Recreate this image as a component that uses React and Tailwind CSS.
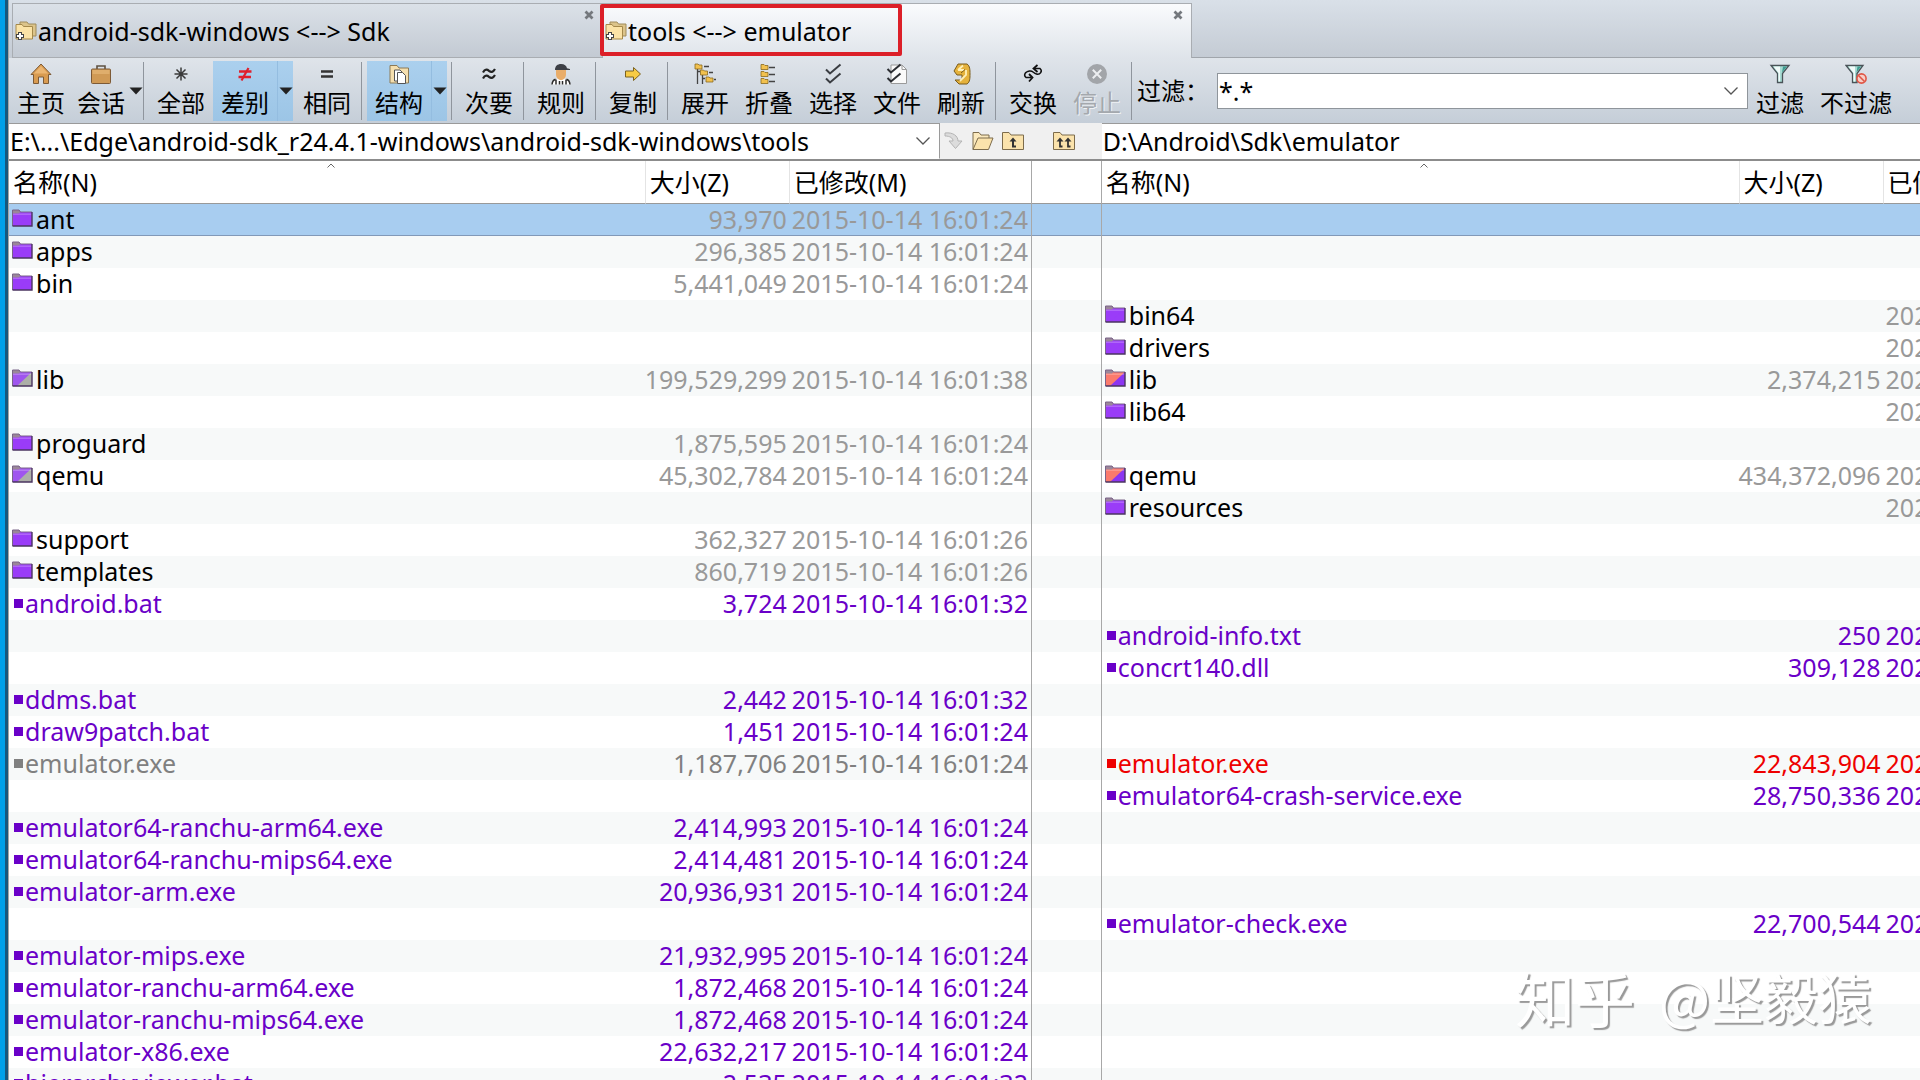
import React, { useState } from "react"

const BLACK = "text-black"
const PURPLE = "text-[#6a00c8]"
const GRAY = "text-[#808080]"
const RED = "text-[#ee0000]"

const T24 = "2015-10-14 16:01:24"
const T26 = "2015-10-14 16:01:26"
const T32 = "2015-10-14 16:01:32"
const T38 = "2015-10-14 16:01:38"

const dir = (name, size, date, kind = "orphan") => ({ name, size, date, kind })
const file = (name, size, date, color = PURPLE) => ({ name, size, date, color })

// one entry per line: [left side, right side]
const rows = [
  [dir("ant", "93,970", T24), null],
  [dir("apps", "296,385", T24), null],
  [dir("bin", "5,441,049", T24), null],
  [null, dir("bin64", "", "2021")],
  [null, dir("drivers", "", "2021")],
  [dir("lib", "199,529,299", T38, "older"), dir("lib", "2,374,215", "2021", "newer")],
  [null, dir("lib64", "", "2021")],
  [dir("proguard", "1,875,595", T24), null],
  [dir("qemu", "45,302,784", T24, "older"), dir("qemu", "434,372,096", "2021", "newer")],
  [null, dir("resources", "", "2021")],
  [dir("support", "362,327", T26), null],
  [dir("templates", "860,719", T26), null],
  [file("android.bat", "3,724", T32), null],
  [null, file("android-info.txt", "250", "2021")],
  [null, file("concrt140.dll", "309,128", "2021")],
  [file("ddms.bat", "2,442", T32), null],
  [file("draw9patch.bat", "1,451", T24), null],
  [file("emulator.exe", "1,187,706", T24, GRAY), file("emulator.exe", "22,843,904", "2021", RED)],
  [null, file("emulator64-crash-service.exe", "28,750,336", "2021")],
  [file("emulator64-ranchu-arm64.exe", "2,414,993", T24), null],
  [file("emulator64-ranchu-mips64.exe", "2,414,481", T24), null],
  [file("emulator-arm.exe", "20,936,931", T24), null],
  [null, file("emulator-check.exe", "22,700,544", "2021")],
  [file("emulator-mips.exe", "21,932,995", T24), null],
  [file("emulator-ranchu-arm64.exe", "1,872,468", T24), null],
  [file("emulator-ranchu-mips64.exe", "1,872,468", T24), null],
  [file("emulator-x86.exe", "22,632,217", T24), null],
  [file("hierarchyviewer.bat", "2,535", T32), null],
]

const Icon = ({ children }) => (
  <svg width="22" height="22" viewBox="0 0 22 22" fill="none" aria-hidden="true">{children}</svg>
)

const HomeIcon = () => (
  <Icon>
    <path d="M11 1 L21 11.5 H18.5 V20.5 H13.5 V14 H8.5 V20.5 H3.5 V11.5 H1 Z" fill="#d99b50" stroke="#7d5a36" strokeLinejoin="round" />
    <path d="M11 3 L18 10.5 H4 Z" fill="#ecb672" />
  </Icon>
)

const SessionIcon = () => (
  <Icon>
    <path d="M7 6 V3 H15 V6" stroke="#5e5142" strokeWidth="1.6" />
    <rect x="1.5" y="6" width="19" height="14.5" rx="1" fill="#d09a55" stroke="#7d5a36" />
    <path d="M2.5 7 H19.5 V11 H2.5 Z" fill="#dfae6c" />
  </Icon>
)

const AllIcon = () => (
  <Icon>
    <path d="M11 4.5 V17.5 M4.5 11 H17.5 M6.5 6.5 L15.5 15.5 M15.5 6.5 L6.5 15.5" stroke="#3a3a3a" strokeWidth="1.5" />
  </Icon>
)

const DiffIcon = () => (
  <Icon>
    <path d="M5 8.5 H17.5 M4.5 14 H17" stroke="#e0202c" strokeWidth="2.6" />
    <path d="M14.5 5 L7.5 17.5" stroke="#e0202c" strokeWidth="2.2" />
  </Icon>
)

const SameIcon = () => (
  <Icon>
    <path d="M5 8.5 H17 M5 13.5 H17" stroke="#333" strokeWidth="2.4" />
  </Icon>
)

const StructureIcon = () => (
  <Icon>
    <path d="M2 2.5 H9 L11 5 H20.5 V20 H2 Z" fill="#f5dfae" stroke="#8c7a56" />
    <path d="M6.5 7 H12 L14 9 V18 H6.5 Z" fill="#fff" stroke="#555" />
    <path d="M9.5 9.5 H14.5 L17.5 12.5 V20.5 H9.5 Z" fill="#fff" stroke="#555" />
  </Icon>
)

const MinorIcon = () => (
  <Icon>
    <path d="M5 9.5 C7 5.5 9.5 6.5 11 7.8 C13 9.4 15 9.5 17 6 M5 15.5 C7 11.5 9.5 12.5 11 13.8 C13 15.4 15 15.5 17 12" stroke="#222" strokeWidth="2.2" />
  </Icon>
)

const RulesIcon = () => (
  <Icon>
    <path d="M1.5 21.5 C2 17 5 15.5 11 15.5 C17 15.5 20 17 20.5 21.5 Z" fill="#fff" />
    <path d="M2 21.5 C2.3 18.5 3.5 17 5.5 16.3 M6 21.5 V16.5 M9.5 21.5 V18 M12.5 21.5 V18 M16 21.5 V16.5 M20 21.5 C19.7 18.5 18.5 17 16.5 16.3" stroke="#2a2a2a" strokeWidth="1.5" />
    <path d="M6 6 H16 V11 C16 14.5 14 17 11 17 C8 17 6 14.5 6 11 Z" fill="#e9ad6a" />
    <path d="M5 7 C5 3 7.5 1 11 1 C14.5 1 16.5 3 17 5.2 L20 6 V7 Z" fill="#3d4046" />
  </Icon>
)

const CopyIcon = () => (
  <Icon>
    <path d="M3.5 8 H11.5 V4.5 L18.5 11 L11.5 17.5 V14 H3.5 Z" fill="#f7cb45" stroke="#7a6222" strokeLinejoin="round" />
  </Icon>
)

const MiniFolder = ({ x, y }) => (
  <path d={`M${x} ${y} h3 l1 1 h3 v4 h-7 z`} fill="#f2c14e" stroke="#8a6a20" strokeWidth="0.8" />
)

const ExpandIcon = () => (
  <Icon>
    <path d="M3.5 6 V21 M8.5 12 V21 M10 3.5 H15 M15 9.5 H19 M3.5 8.5 H6 M8.5 15.5 H11 M20 16.5 H22" stroke="#444" strokeWidth="1.3" />
    <MiniFolder x={1} y={1} />
    <MiniFolder x={6.5} y={7} />
    <MiniFolder x={12} y={14} />
  </Icon>
)

const CollapseIcon = () => (
  <Icon>
    <path d="M11 4.5 H17 M11 11.5 H17 M11 18.5 H17" stroke="#444" strokeWidth="1.5" />
    <MiniFolder x={3} y={1.5} />
    <MiniFolder x={3} y={8.5} />
    <MiniFolder x={3} y={15.5} />
  </Icon>
)

const SelectIcon = () => (
  <Icon>
    <path d="M4 6.5 L8 10.5 L18.5 1.5 M4 15.5 L8 19.5 L18.5 10.5" stroke="#3a3d42" strokeWidth="2" />
  </Icon>
)

const FilesIcon = () => (
  <Icon>
    <path d="M5 2 H16 L20.5 6.5 V20.5 H5 Z" fill="#fafafa" stroke="#9a9a9a" />
    <path d="M16 2 V6.5 H20.5" stroke="#9a9a9a" />
    <path d="M1.5 6 L5 9.5 L14.5 1.5 M1.5 15 L5 18.5 L14.5 10.5" stroke="#2c2e33" strokeWidth="2" />
  </Icon>
)

const RefreshIcon = () => (
  <Icon>
    <path d="M12 1 H17 C20 3 20 7 20 11 C20 15 20 19 17 21 H9 L5 17 H12 V12 H7 L4 8 L8 1 Z" fill="#e5b23c" stroke="#7a5c1c" strokeLinejoin="round" />
    <path d="M8 7 L13 2.5 M8 7 H14 M16 7 V12 L10 18" stroke="#fff0b8" strokeWidth="1.8" />
    <path d="M11 10 L15 6.5" stroke="#7a5c1c" />
  </Icon>
)

const SwapIcon = () => (
  <Icon>
    <path d="M12 5.5 H18 C21 8 18 12 14.5 11 C11 10 11 7.5 7.5 8 C2.5 8.8 1.5 12.5 4 14.5 H9" stroke="#111" strokeWidth="1.5" />
    <path d="M15.5 2 L11.5 5.5 L15.5 9 M7 11 L10.5 14.5 L7 18.5" stroke="#111" strokeWidth="1.8" />
  </Icon>
)

const StopIcon = () => (
  <Icon>
    <circle cx="11" cy="11" r="10" fill="#a2a5a9" />
    <path d="M6.8 6.8 L15.2 15.2 M15.2 6.8 L6.8 15.2" stroke="#eceef0" strokeWidth="2" />
  </Icon>
)

const funnel = "M2 2.5 H20 L13.5 10.5 V19.5 H8.5 V10.5 Z"

const FilterIcon = () => (
  <Icon>
    <path d={funnel} fill="#a8dcd4" stroke="#4a5358" strokeWidth="1.3" />
    <path d="M4.5 3.5 H11 V18.5 H9.5 V10 Z" fill="#f2fbfa" />
    <path d="M14 3.5 H18 L13 9.8 Z" fill="#3f9c90" />
  </Icon>
)

const NoFilterIcon = () => (
  <Icon>
    <path d="M1 2.5 H18 L12 10.5 V19.5 H7.5 V10.5 Z" fill="#a8dcd4" stroke="#4a5358" strokeWidth="1.3" />
    <path d="M3.5 3.5 H10 V18.5 H8.5 V10 Z" fill="#f2fbfa" />
    <path d="M12.5 3.5 H16 L11.5 9.5 Z" fill="#3f9c90" />
    <circle cx="16.5" cy="15.5" r="4.6" fill="#f6cfc8" stroke="#e05544" strokeWidth="1.6" />
    <path d="M13.5 12.5 L19.5 18.5" stroke="#e05544" strokeWidth="1.6" />
  </Icon>
)

const SessionTabIcon = () => (
  <svg width="22" height="22" viewBox="0 0 22 22" fill="none" aria-hidden="true" className="shrink-0">
    <path d="M5 2 H12 L13.5 4 H21 V16 H5 Z" fill="#dcc48a" stroke="#a08c5c" />
    <path d="M1 4.5 H7 L8.5 6.5 H17.5 V19 H1 Z" fill="#fbe3a6" stroke="#a5894a" />
    <path d="M5 12 V20 M1 16 H9" stroke="#444" strokeWidth="4" />
    <path d="M5 13 V19 M2 16 H8" stroke="#fff" strokeWidth="2" />
  </svg>
)

const folderFills = {
  orphan: ["#9a3cf8", "#9a3cf8"],
  older: ["#9f55ee", "#adb0a8"],
  newer: ["#fb7a6c", "#8c35f2"],
}

function FolderIcon({ kind }) {
  const [front, corner] = folderFills[kind]
  return (
    <svg width="21" height="20" viewBox="0 0 21 20" aria-hidden="true" className="shrink-0">
      <path d="M0.5 1 H7 L8.5 3 H20 V17 H0.5 Z" fill={front} />
      <path d="M20 3 V17 H5 Z" fill={corner} />
      <path d="M1 4.5 H19.5 V6 H1 Z" fill="#fff" opacity="0.22" />
      <path d="M0.5 1 H7 L8.5 3 L7 4.5 H0.5 Z" fill="#9b8799" />
      <path d="M0.5 17 V1 H7 L8.5 3 H20" fill="none" stroke="#7a6488" />
      <path d="M20 3 V17 H0.5" fill="none" stroke="#4b3560" strokeWidth="1.4" />
    </svg>
  )
}

const Chevron = () => (
  <svg width="16" height="10" viewBox="0 0 16 10" fill="none" aria-hidden="true">
    <path d="M1.5 1.5 L8 8 L14.5 1.5" stroke="#555" strokeWidth="1.3" />
  </svg>
)

function ToolButton({ icon, label, className = "w-16", disabled }) {
  return (
    <button
      type="button"
      disabled={disabled}
      className={`flex h-15 shrink-0 flex-col items-center gap-1 whitespace-nowrap pt-[2px] text-2xl leading-7 ${disabled ? "text-[#a4a8ad] [text-shadow:1px_1px_0_#eef1f4]" : "text-black"} ${className}`}
    >
      {icon}
      {label}
    </button>
  )
}

function DropButton({ icon, label, active, className, arrowClass = "w-4" }) {
  return (
    <div className={`flex shrink-0 ${active ? "mr-[2px] bg-linear-to-b from-[#abd0ee] to-[#9cc5e6]" : ""}`}>
      <ToolButton icon={icon} label={label} className={className} />
      <button
        type="button"
        aria-label={`${label} ▾`}
        className={`flex items-center justify-center ${arrowClass} ${active ? "border-l border-[#94bde0]" : ""}`}
      >
        <svg width="14" height="8" viewBox="0 0 14 8" aria-hidden="true" className="shrink-0">
          <path d="M0.5 0.5 H13.5 L7 7.5 Z" fill="#222" />
        </svg>
      </button>
    </div>
  )
}

const Separator = () => <div className="ml-[2px] mr-[5px] h-[58px] w-px shrink-0 bg-[#8f959d]" />

function Tab({ title, active, children }) {
  return (
    <div
      className={`relative flex w-[590px] items-center border-l border-t border-[#a9adb2] pl-[2px] ${
        active ? "border-r bg-linear-to-b from-[#fafbfd] to-[#dfe4ea]" : "border-b bg-linear-to-b from-[#dbe1e8] to-[#c3cad3]"
      }`}
    >
      <button type="button" role="tab" aria-selected={active} className="flex grow items-center gap-px text-left text-[25px] leading-8">
        <SessionTabIcon />
        {title}
      </button>
      <button type="button" aria-label="关闭" className="mr-2 mt-[6px] self-start">
        <svg width="10" height="10" viewBox="0 0 10 10" aria-hidden="true">
          <path d="M1.5 1.5 L8.5 8.5 M8.5 1.5 L1.5 8.5" stroke="#74787d" strokeWidth="2.8" />
        </svg>
      </button>
      {children}
    </div>
  )
}

function PathBox({ label, value }) {
  return (
    <div className="relative flex min-w-0 grow border border-l-0 border-[#9a9a9a] border-b-transparent bg-white">
      <select aria-label={label} defaultValue={value} className="w-full appearance-none bg-transparent pl-px text-[25px] leading-8 outline-none">
        <option>{value}</option>
      </select>
      <span className="pointer-events-none absolute right-2 top-3">
        <Chevron />
      </span>
    </div>
  )
}

function Pane({ side, selected, onSelect }) {
  const th = "h-[43px] border-b border-b-[#999] py-0 pl-1 text-left font-normal"
  const td = "h-8 p-0 pb-[2px]"
  return (
    <table className="w-full table-fixed border-separate border-spacing-0 whitespace-nowrap">
      <colgroup>
        <col />
        <col className="w-36" />
        <col className="w-[242px]" />
      </colgroup>
      <thead>
        <tr className="text-[25px] leading-8">
          <th className={`${th} relative`}>
            名称(N)
            <svg width="8" height="5" viewBox="0 0 8 5" fill="none" aria-hidden="true" className="absolute left-1/2 top-[2px]">
              <path d="M0.5 4.5 L4 1 L7.5 4.5" stroke="#666" />
            </svg>
          </th>
          <th className={`${th} border-l border-l-[#e4e4e4]`}>大小(Z)</th>
          <th className={`${th} border-l border-l-[#e4e4e4]`}>已修改(M)</th>
        </tr>
      </thead>
      <tbody>
        {rows.map((row, i) => {
          const item = row[side]
          const muted = item && item.kind ? "text-[#999]" : item ? item.color : ""
          return (
            <tr
              key={i}
              onClick={() => onSelect(i)}
              className={`text-[25px] leading-[30px] ${i === selected ? "bg-[#a8cdf0] [box-shadow:inset_0_-1px_0_#8299b8]" : "even:bg-[#f7f9f9]"}`}
            >
              <td className={td}>
                {item && (
                  <div className={`flex items-center ${item.kind ? `gap-[3px] pl-[3px] ${BLACK}` : `gap-[2px] pl-[5px] ${item.color}`}`}>
                    {item.kind ? <FolderIcon kind={item.kind} /> : <span className="size-[9px] bg-current" />}
                    {item.name}
                  </div>
                )}
              </td>
              <td className={`${td} pr-[2px] text-right ${muted}`}>{item && item.size}</td>
              <td className={`${td} pl-[3px] ${muted}`}>{item && item.date}</td>
            </tr>
          )
        })}
      </tbody>
    </table>
  )
}

function App() {
  const [selected, setSelected] = useState(0)
  const [filter, setFilter] = useState("*.*")

  return (
    <div className="relative flex h-screen overflow-hidden bg-white font-['Noto_Sans','Noto_Sans_CJK_SC',sans-serif] text-black">
      <div className="w-2 shrink-0 border-r-[3px] border-[#17577c] bg-[#00a0e9]" />
      <div className="flex min-w-0 grow flex-col border-l border-[#a5a5a5]">
        <div role="tablist" className="flex h-[58px] shrink-0 bg-linear-to-b from-[#d9e0e8] to-[#c4cbd4] pl-[3px] pt-[3px]">
          <Tab title="android-sdk-windows <--> Sdk" />
          <Tab title="tools <--> emulator" active>
            <div className="pointer-events-none absolute bottom-[2px] -left-[3px] top-0 w-[302px] rounded-xs border-4 border-[#dc1f28]" />
          </Tab>
          <div className="grow border-b border-[#a0a5ab]" />
        </div>

        <div className="flex h-[65px] shrink-0 items-center bg-linear-to-b from-[#dfe4ea] to-[#c5ced8] pl-[2px] pr-5">
          <ToolButton icon={<HomeIcon />} label="主页" className="w-15" />
          <DropButton icon={<SessionIcon />} label="会话" className="w-15" arrowClass="w-[10px]" />
          <Separator />
          <ToolButton icon={<AllIcon />} label="全部" />
          <DropButton icon={<DiffIcon />} label="差别" active />
          <ToolButton icon={<SameIcon />} label="相同" />
          <Separator />
          <DropButton icon={<StructureIcon />} label="结构" active />
          <Separator />
          <ToolButton icon={<MinorIcon />} label="次要" />
          <Separator />
          <ToolButton icon={<RulesIcon />} label="规则" />
          <Separator />
          <ToolButton icon={<CopyIcon />} label="复制" />
          <Separator />
          <ToolButton icon={<ExpandIcon />} label="展开" />
          <ToolButton icon={<CollapseIcon />} label="折叠" />
          <ToolButton icon={<SelectIcon />} label="选择" />
          <ToolButton icon={<FilesIcon />} label="文件" />
          <ToolButton icon={<RefreshIcon />} label="刷新" />
          <Separator />
          <ToolButton icon={<SwapIcon />} label="交换" />
          <ToolButton icon={<StopIcon />} label="停止" disabled />
          <Separator />
          <label htmlFor="filter" className="w-20 shrink-0 whitespace-nowrap text-2xl leading-9">过滤：</label>
          <div className="flex h-9 min-w-0 grow items-center border border-[#8f959b] bg-white pr-2">
            <input
              id="filter"
              value={filter}
              onChange={(e) => setFilter(e.target.value)}
              className="w-full min-w-0 pl-px text-[25px] leading-8 outline-none"
            />
            <button type="button" aria-label="过滤历史">
              <Chevron />
            </button>
          </div>
          <ToolButton icon={<FilterIcon />} label="过滤" />
          <ToolButton icon={<NoFilterIcon />} label="不过滤" className="w-22" />
        </div>

        <div className="grid grow grid-cols-[minmax(0,5fr)_70px_minmax(0,4fr)]">
          <section>
            <div className="flex h-[38px] border-b-2 border-[#8c8c8c] bg-[#f0f0f0]">
              <PathBox label="左侧路径" value="E:\...\Edge\android-sdk_r24.4.1-windows\android-sdk-windows\tools" />
              <div className="flex shrink-0 items-center gap-2 pl-1 pr-2">
                <button type="button" aria-label="前往" disabled>
                  <svg width="20" height="20" viewBox="0 0 20 20" aria-hidden="true">
                    <path d="M1 2 C9 1 14 5 14 10 H18 L11.5 17.5 L5 10 H9 C9 7 6 5 1 5 Z" fill="#dcdcdc" stroke="#b4b4b4" />
                  </svg>
                </button>
                <button type="button" aria-label="浏览文件夹">
                  <svg width="22" height="20" viewBox="0 0 22 20" aria-hidden="true">
                    <path d="M1 18.5 V1.5 H7 L9 4 H17 V7" fill="#fbe9bd" stroke="#7d6c4c" />
                    <path d="M1 18.5 L6 7 H21 L16.5 18.5 Z" fill="#fbe3ac" stroke="#7d6c4c" strokeLinejoin="round" />
                  </svg>
                </button>
                <button type="button" aria-label="上一级">
                  <svg width="22" height="20" viewBox="0 0 22 20" fill="none" aria-hidden="true">
                    <path d="M0.5 18.5 V1.5 H7 L9 4 H21.5 V18.5 Z" fill="#fbe3ac" stroke="#7d6c4c" />
                    <path d="M11 8 V15.5 H14" stroke="#333" strokeWidth="2" />
                    <path d="M7.5 10.5 L11 6.5 L14.5 10.5 Z" fill="#333" />
                  </svg>
                </button>
              </div>
            </div>
            <div className="border-r border-[#a8a8a8]">
              <Pane side={0} selected={selected} onSelect={setSelected} />
            </div>
          </section>

          <div>
            <div className="flex h-[38px] items-center border-b-2 border-[#8c8c8c] bg-[#f0f0f0] pl-[21px]">
              <button type="button" aria-label="两侧上一级">
                <svg width="22" height="20" viewBox="0 0 22 20" fill="none" aria-hidden="true">
                  <path d="M0.5 18.5 V1.5 H7 L9 4 H21.5 V18.5 Z" fill="#fbe3ac" stroke="#7d6c4c" />
                  <path d="M7 8 V15.5 H9.5 M15 8 V15.5 H17.5" stroke="#333" strokeWidth="1.8" />
                  <path d="M3.5 10.5 L7 6.5 L10.5 10.5 Z M11.5 10.5 L15 6.5 L18.5 10.5 Z" fill="#333" />
                </svg>
              </button>
            </div>
            <div className="border-r border-[#a8a8a8]">
              <div className="h-[43px] border-b border-[#999]" />
              {rows.map((_, i) => (
                <div key={i} className={`h-8 ${i === selected ? "bg-[#a8cdf0] [box-shadow:inset_0_-1px_0_#8299b8]" : i % 2 ? "bg-[#f7f9f9]" : ""}`} />
              ))}
            </div>
          </div>

          <section className="overflow-hidden">
            <div className="flex h-[38px] border-b-2 border-[#8c8c8c]">
              <div className="flex w-[125%] shrink-0">
                <PathBox label="右侧路径" value="D:\Android\Sdk\emulator" />
              </div>
            </div>
            <div className="w-[125%]">
              <Pane side={1} selected={selected} onSelect={setSelected} />
            </div>
          </section>
        </div>
      </div>

      <div className="pointer-events-none absolute bottom-11 right-12 flex items-center gap-6 whitespace-nowrap font-['Noto_Sans_CJK_SC',sans-serif] text-[54px] leading-[78px] text-white [text-shadow:2px_2px_1px_#999]">
        <span className="text-[60px]">知乎</span>
        <span>@坚毅猿</span>
      </div>
    </div>
  )
}

export default App
